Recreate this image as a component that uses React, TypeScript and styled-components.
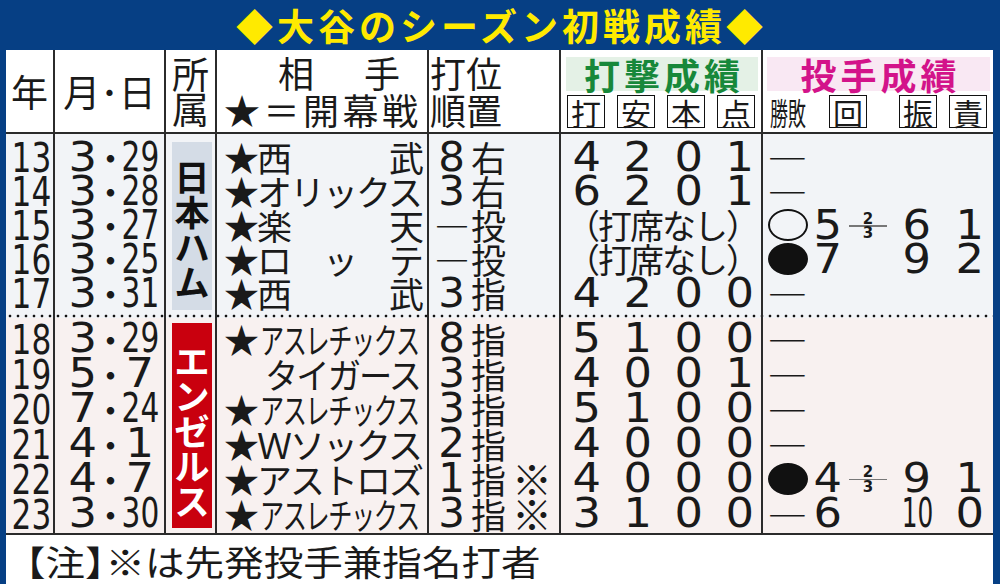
import React from "react";
import styled, { createGlobalStyle } from "styled-components";

const FONT = `"Noto Sans CJK JP", "Noto Sans", sans-serif`;
const NUM_FONT = `"DejaVu Sans", "Noto Sans", sans-serif`;
const NAVY = "#063f84";
const LINE = "#2b2b2b";
const W = [49, 111, 51, 212, 132, 202, 230];

const GlobalStyle = createGlobalStyle`
  html, body { margin: 0; padding: 0; }
  body { background: ${NAVY}; font-family: ${FONT}; color: #1a1a1a; }
`;

const Page = styled.div`
  width: 1000px;
  height: 584px;
  box-sizing: border-box;
  background: ${NAVY};
  padding: 0 7px 6px 6px;
  display: flex;
  flex-direction: column;
`;

const Title = styled.div`
  height: 50px;
  flex: none;
  display: flex;
  align-items: center;
  justify-content: center;
  color: #ffea00;
  font-size: 37px;
  font-weight: 700;
  letter-spacing: 4px;
  padding-left: 4px;
`;

const Table = styled.div`
  flex: 1;
  background: #fff;
  display: flex;
  flex-direction: column;
`;

const Row = styled.div<{ $h: number; $bg?: string; $dots?: boolean; $line?: boolean }>`
  height: ${p => p.$h}px;
  flex: none;
  display: flex;
  box-sizing: border-box;
  border-bottom: ${p => (p.$line ? `2px solid ${LINE}` : "none")};
  background: ${p =>
    p.$dots
      ? `radial-gradient(circle at 4px 2px, #111 1.1px, transparent 1.7px) 0 100% / 8px 4px repeat-x, ${p.$bg}`
      : p.$bg ?? "#fff"};
`;

const Col = styled.div<{ $w: number; $pt?: number }>`
  width: ${p => p.$w}px;
  flex: none;
  box-sizing: border-box;
  border-right: 2px solid ${LINE};
  padding-top: ${p => p.$pt ?? 0}px;
  display: flex;
  flex-direction: column;
  &:last-child { border-right: none; }
`;

/* header */
const HCenter = styled.div`
  flex: 1;
  display: flex;
  flex-direction: column;
  align-items: center;
  justify-content: center;
  font-size: 37px;
  line-height: 35px;
  white-space: nowrap;
`;

const HLine = styled.div<{ $pl?: number; $ls?: number }>`
  height: 37px;
  line-height: 37px;
  font-size: 36px;
  white-space: nowrap;
  padding-left: ${p => p.$pl ?? 0}px;
  letter-spacing: ${p => p.$ls ?? 0}px;
`;

const HPair = styled.div`
  height: 37px;
  line-height: 37px;
  font-size: 36px;
  display: flex;
  justify-content: center;
  gap: 50px;
  padding-left: 34px;
`;

const Band = styled.div<{ $bg: string; $fg: string; $ml: number }>`
  height: 34px;
  margin: 7px 3px 0 ${p => p.$ml}px;
  background: ${p => p.$bg};
  color: ${p => p.$fg};
  font-size: 36px;
  font-weight: 700;
  line-height: 34px;
  letter-spacing: 4px;
  text-align: center;
  padding-left: 4px;
`;

const BoxRow = styled.div<{ $pl: number }>`
  margin-top: 4px;
  padding-left: ${p => p.$pl}px;
  display: flex;
  align-items: center;
  gap: 12px;
`;

const Box = styled.div<{ $ml?: number }>`
  width: 38px;
  height: 33px;
  box-sizing: border-box;
  border: 1.5px solid #111;
  margin-left: ${p => p.$ml ?? 0}px;
  display: flex;
  align-items: center;
  justify-content: center;
  font-size: 30px;
  line-height: 29px;
  padding-top: 1px;
`;

const SmallLabel = styled.div`
  width: 37px;
  height: 33px;
  font-size: 31px;
  line-height: 33px;
  white-space: nowrap;
  margin-right: -12px;
`;

const Squeeze = styled.span<{ $sx: number; $ml?: number }>`
  display: inline-block;
  transform: scaleX(${p => p.$sx});
  transform-origin: left center;
  margin-left: ${p => p.$ml ?? 0}px;
`;

/* figures, drawn in a broader face like the newspaper's digits; $sx narrows or widens */
const Num = styled.span<{ $sx?: number }>`
  display: inline-block;
  font-family: ${NUM_FONT};
  font-size: 40px;
  transform: scaleX(${p => p.$sx ?? 1.12});
`;

/* body */
const Line = styled.div<{ $h: number }>`
  height: ${p => p.$h}px;
  line-height: ${p => p.$h}px;
  font-size: 35px;
  white-space: nowrap;
  flex: none;
`;

const YearLine = styled(Line)`
  text-align: center;
`;

const DateLine = styled(Line)`
  display: flex;
  padding-left: 11px;
`;

const Part = styled.div<{ $w: number }>`
  width: ${p => p.$w}px;
  flex: none;
  display: flex;
  justify-content: center;
`;

const OppLine = styled(Line)`
  padding-left: 7px;
  letter-spacing: -2px;
`;

const OrderLine = styled(Line)`
  display: flex;
  padding-left: 4px;
`;

const Ref = styled.span`
  margin-left: 6px;
  font-size: 40px;
`;

const CellLine = styled(Line)`
  display: flex;
  align-items: center;
`;

const Cell = styled.div<{ $w: number }>`
  width: ${p => p.$w}px;
  flex: none;
  display: flex;
  align-items: center;
  justify-content: center;
`;

const NoBat = styled.div`
  width: 100%;
  text-align: center;
  letter-spacing: -2px;
  font-size: 34px;
  padding-left: 2px;
`;

const Mark = styled.div<{ $filled?: boolean }>`
  width: 40px;
  height: 32px;
  box-sizing: border-box;
  border-radius: 50%;
  border: 2.5px solid #111;
  background: ${p => (p.$filled ? "#111" : "transparent")};
  margin-left: 4px;
`;

const Dash = styled.span`
  display: inline-block;
  transform: scaleX(1.15);
  margin-left: 4px;
`;

const Frac = styled.div`
  width: 38px;
  display: flex;
  flex-direction: column;
  align-items: center;
  font-family: ${NUM_FONT};
  font-size: 15px;
  line-height: 12px;
  font-weight: 700;
  margin-top: 2px;
`;

const FracBar = styled.div`
  width: 100%;
  height: 1.5px;
  background: #777;
  margin: 0.5px 0;
`;

const TeamBlock = styled.div<{ $bg: string; $fg: string; $mt: number; $h: number; $pt: number }>`
  width: 40px;
  height: ${p => p.$h}px;
  margin: ${p => p.$mt}px 0 0 6px;
  box-sizing: border-box;
  background: ${p => p.$bg};
  color: ${p => p.$fg};
  font-size: 35px;
  font-weight: 700;
  line-height: 35px;
  display: flex;
  flex-direction: column;
  align-items: center;
  justify-content: center;
  padding-top: ${p => p.$pt}px;
`;

const Note = styled.div`
  flex: 1;
  display: flex;
  align-items: center;
  padding: 0 0 4px 0;
  font-size: 35px;
  white-space: nowrap;
`;

const NoteText = styled.span`
  display: inline-block;
  transform: scaleX(1.13);
  transform-origin: left center;
`;

const CloseBracket = styled.span`
  margin-right: -17px;
`;

type Pitch =
  | { kind: "dash"; inn?: string; so?: string; er?: string }
  | { kind: "win" | "loss"; inn: string; frac?: boolean; so: string; er: string };

interface Game {
  year: string;
  mon: string;
  day: string;
  star: boolean;
  opp: string;
  sx?: number;
  ml?: number;
  ordNo: string;
  ordPos: string;
  twoWay?: boolean;
  bat: string[] | null;
  pit: Pitch;
}

const STAR = "★";

const group1: Game[] = [
  { year: "13", mon: "3", day: "29", star: true, opp: "西　　　武", ordNo: "8", ordPos: "右", bat: ["4", "2", "0", "1"], pit: { kind: "dash" } },
  { year: "14", mon: "3", day: "28", star: true, opp: "オリックス", ordNo: "3", ordPos: "右", bat: ["6", "2", "0", "1"], pit: { kind: "dash" } },
  { year: "15", mon: "3", day: "27", star: true, opp: "楽　　　天", ordNo: "―", ordPos: "投", bat: null, pit: { kind: "win", inn: "5", frac: true, so: "6", er: "1" } },
  { year: "16", mon: "3", day: "25", star: true, opp: "ロ　ッ　テ", ordNo: "―", ordPos: "投", bat: null, pit: { kind: "loss", inn: "7", so: "9", er: "2" } },
  { year: "17", mon: "3", day: "31", star: true, opp: "西　　　武", ordNo: "3", ordPos: "指", bat: ["4", "2", "0", "0"], pit: { kind: "dash" } },
];

const group2: Game[] = [
  { year: "18", mon: "3", day: "29", star: true, opp: "アスレチックス", sx: 0.69, ml: 3, ordNo: "8", ordPos: "指", bat: ["5", "1", "0", "0"], pit: { kind: "dash" } },
  { year: "19", mon: "5", day: "7", star: false, opp: "タイガース", sx: 0.95, ml: 41, ordNo: "3", ordPos: "指", bat: ["4", "0", "0", "1"], pit: { kind: "dash" } },
  { year: "20", mon: "7", day: "24", star: true, opp: "アスレチックス", sx: 0.69, ml: 3, ordNo: "3", ordPos: "指", bat: ["5", "1", "0", "0"], pit: { kind: "dash" } },
  { year: "21", mon: "4", day: "1", star: true, opp: "Ｗソックス", ordNo: "2", ordPos: "指", bat: ["4", "0", "0", "0"], pit: { kind: "dash" } },
  { year: "22", mon: "4", day: "7", star: true, opp: "アストロズ", ordNo: "1", ordPos: "指", twoWay: true, bat: ["4", "0", "0", "0"], pit: { kind: "loss", inn: "4", frac: true, so: "9", er: "1" } },
  { year: "23", mon: "3", day: "30", star: true, opp: "アスレチックス", sx: 0.69, ml: 3, ordNo: "3", ordPos: "指", twoWay: true, bat: ["3", "1", "0", "0"], pit: { kind: "dash", inn: "6", so: "10", er: "0" } },
];

const PIT_W = [45, 40, 40, 58, 47];

// a single digit is a wide figure; two digits are set narrow, as in the paper
const Fig = ({ v, narrow = 0.62 }: { v?: string; narrow?: number }) => {
  if (!v) return null;
  return <Num $sx={v.length > 1 ? narrow : 1.12}>{v}</Num>;
};

const PitchCells = ({ p }: { p: Pitch }) => {
  const mark =
    p.kind === "dash" ? <Dash>―</Dash> : <Mark $filled={p.kind === "loss"} />;
  const frac = p.kind !== "dash" && p.frac;
  return (
    <>
      <Cell $w={PIT_W[0]}>{mark}</Cell>
      <Cell $w={PIT_W[1]}>
        <Fig v={p.inn} />
      </Cell>
      <Cell $w={PIT_W[2]}>
        {frac && (
          <Frac>
            <span>2</span>
            <FracBar />
            <span>3</span>
          </Frac>
        )}
      </Cell>
      <Cell $w={PIT_W[3]}>
        <Fig v={p.so} />
      </Cell>
      <Cell $w={PIT_W[4]}>
        <Fig v={p.er} />
      </Cell>
    </>
  );
};

interface GroupProps {
  games: Game[];
  h: number;
  rowH: number;
  pt: number;
  bg: string;
  dots?: boolean;
  line?: boolean;
  team: string;
  teamBg: string;
  teamFg: string;
  teamMt: number;
  teamH: number;
  teamPt: number;
}

const Group = ({ games, h, rowH, pt, bg, dots, line, team, teamBg, teamFg, teamMt, teamH, teamPt }: GroupProps) => (
  <Row $h={h} $bg={bg} $dots={dots} $line={line}>
    <Col $w={W[0]} $pt={pt}>
      {games.map(g => (
        <YearLine key={g.year} $h={rowH}>
          <Num $sx={0.78}>{g.year}</Num>
        </YearLine>
      ))}
    </Col>
    <Col $w={W[1]} $pt={pt}>
      {games.map(g => (
        <DateLine key={g.year} $h={rowH}>
          <Part $w={34}>
            <Num>{g.mon}</Num>
          </Part>
          <Part $w={21}>・</Part>
          <Part $w={38}>
            <Fig v={g.day} narrow={0.74} />
          </Part>
        </DateLine>
      ))}
    </Col>
    <Col $w={W[2]}>
      <TeamBlock $bg={teamBg} $fg={teamFg} $mt={teamMt} $h={teamH} $pt={teamPt}>
        {team.split("").map((c, i) => (
          <span key={i}>{c}</span>
        ))}
      </TeamBlock>
    </Col>
    <Col $w={W[3]} $pt={pt}>
      {games.map(g => (
        <OppLine key={g.year} $h={rowH}>
          {g.star && STAR}
          {g.sx ? (
            <Squeeze $sx={g.sx} $ml={g.ml}>
              {g.opp}
            </Squeeze>
          ) : (
            g.opp
          )}
        </OppLine>
      ))}
    </Col>
    <Col $w={W[4]} $pt={pt}>
      {games.map(g => (
        <OrderLine key={g.year} $h={rowH}>
          <Part $w={38}>{g.ordNo === "―" ? g.ordNo : <Num $sx={1.05}>{g.ordNo}</Num>}</Part>
          <span>{g.ordPos}</span>
          {g.twoWay && <Ref>※</Ref>}
        </OrderLine>
      ))}
    </Col>
    <Col $w={W[5]} $pt={pt}>
      {games.map(g => (
        <CellLine key={g.year} $h={rowH}>
          {g.bat ? (
            g.bat.map((b, i) => (
              <Cell key={i} $w={51}>
                <Num>{b}</Num>
              </Cell>
            ))
          ) : (
            <NoBat>（打席なし）</NoBat>
          )}
        </CellLine>
      ))}
    </Col>
    <Col $w={W[6]} $pt={pt}>
      {games.map(g => (
        <CellLine key={g.year} $h={rowH}>
          <PitchCells p={g.pit} />
        </CellLine>
      ))}
    </Col>
  </Row>
);

export default function App() {
  return (
    <Page>
      <GlobalStyle />
      <Title>◆大谷のシーズン初戦成績◆</Title>
      <Table>
        <Row $h={84} $line>
          <Col $w={W[0]}>
            <HCenter>年</HCenter>
          </Col>
          <Col $w={W[1]}>
            <HCenter>月･日</HCenter>
          </Col>
          <Col $w={W[2]}>
            <HCenter>
              <span>所</span>
              <span>属</span>
            </HCenter>
          </Col>
          <Col $w={W[3]} $pt={4}>
            <HPair>
              <span>相</span>
              <span>手</span>
            </HPair>
            <HLine $pl={7} $ls={3.5}>★＝開幕戦</HLine>
          </Col>
          <Col $w={W[4]} $pt={4}>
            <HLine $pl={1}>打位</HLine>
            <HLine $pl={1}>順置</HLine>
          </Col>
          <Col $w={W[5]}>
            <Band $bg="#e4f1e6" $fg="#17883a" $ml={5}>打撃成績</Band>
            <BoxRow $pl={6}>
              <Box>打</Box>
              <Box>安</Box>
              <Box>本</Box>
              <Box>点</Box>
            </BoxRow>
          </Col>
          <Col $w={W[6]}>
            <Band $bg="#f9e8f3" $fg="#d3138a" $ml={4}>投手成績</Band>
            <BoxRow $pl={7}>
              <SmallLabel>
                <Squeeze $sx={0.58}>勝敗</Squeeze>
              </SmallLabel>
              <Box $ml={22}>回</Box>
              <Box $ml={20}>振</Box>
              <Box>責</Box>
            </BoxRow>
          </Col>
        </Row>
        <Group
          games={group1}
          h={184}
          rowH={34}
          pt={6}
          bg="#f2f4f7"
          dots
          team="日本ハム"
          teamBg="#d4dce6"
          teamFg="#111"
          teamMt={8}
          teamH={168}
          teamPt={4}
        />
        <Group
          games={group2}
          h={217}
          rowH={35}
          pt={3}
          bg="#f8f1f0"
          line
          team="エンゼルス"
          teamBg="#c9000e"
          teamFg="#fff"
          teamMt={5}
          teamH={205}
          teamPt={8}
        />
        <Note>
          <NoteText>
            【注<CloseBracket>】</CloseBracket>※は先発投手兼指名打者
          </NoteText>
        </Note>
      </Table>
    </Page>
  );
}
